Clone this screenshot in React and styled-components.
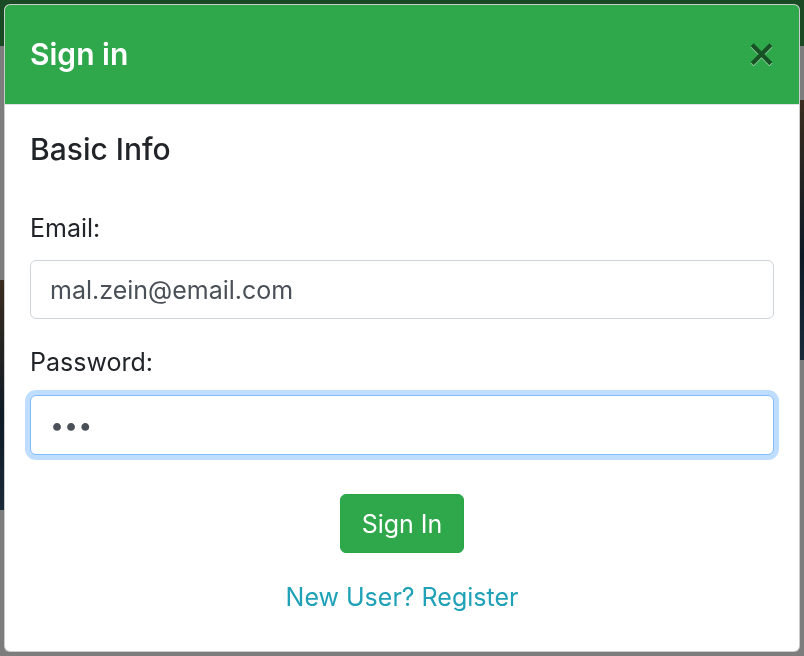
import React from 'react'
import styled, { createGlobalStyle } from 'styled-components'

const GlobalStyle = createGlobalStyle`
  html, body {
    margin: 0;
    padding: 0;
    width: 804px;
    height: 656px;
    overflow: hidden;
    font-family: Inter, "Liberation Sans", sans-serif;
  }
  * { box-sizing: border-box; }
`

// the dimmed page behind the dialog
const Page = styled.div`
  width: 804px;
  height: 656px;
  background: #7d7d7d;
  display: flex;
  flex-direction: column;
`

const Navbar = styled.div`
  height: 46px;
  background: #1a4a23;
`

const PageBody = styled.div`
  flex: 1;
  display: flex;
  justify-content: space-between;
  padding-top: 54px;
`

const Photo = styled.div`
  width: 12px;
  height: ${p => p.h}px;
  margin-top: ${p => p.top}px;
  background: linear-gradient(180deg, #3a2c1e, #0d1a26 60%, #1a2a3a);
`

const Overlay = styled.div`
  position: fixed;
  inset: 0;
  padding: 4px;
  display: flex;
`

const Modal = styled.div`
  width: 796px;
  height: 648px;
  background: #fff;
  border: 1px solid rgba(0, 0, 0, 0.2);
  border-radius: 6px;
  overflow: hidden;
  display: flex;
  flex-direction: column;
`

const Header = styled.div`
  background: #2fa74b;
  border-bottom: 1px solid #dee2e6;
  padding: 27px 22px 27px 25px;
  display: flex;
  align-items: center;
  justify-content: space-between;
`

const Title = styled.h5`
  margin: 0;
  color: #fff;
  font-size: 30px;
  font-weight: 600;
  line-height: 45px;
`

const Close = styled.button`
  border: 0;
  background: transparent;
  padding: 0;
  margin-top: -3px;
  font-family: "DejaVu Sans", sans-serif;
  font-size: 37px;
  font-weight: 700;
  line-height: 1;
  color: #000;
  opacity: 0.5;
  text-shadow: 0 1px 0 #fff;
  cursor: pointer;
`

const Body = styled.div`
  padding: 26px 25px 0 25px;
  display: flex;
  flex-direction: column;
  color: #212529;
`

const Heading = styled.h4`
  margin: 0 0 43px;
  font-size: 30px;
  font-weight: 500;
  line-height: 36px;
`

const Label = styled.label`
  display: block;
  font-size: 25px;
  line-height: 36px;
  margin-bottom: ${p => p.gap}px;
`

const Input = styled.input`
  display: block;
  width: 100%;
  height: ${p => p.h}px;
  padding: 0 19px;
  font-family: inherit;
  font-size: 25px;
  color: #495057;
  background: #fff;
  border: 1px solid ${p => (p.focused ? '#80bdff' : '#ced4da')};
  border-radius: 6px;
  outline: none;
  box-shadow: ${p => (p.focused ? '0 0 0 5px rgba(0, 123, 255, 0.25)' : 'none')};
  margin-bottom: ${p => p.gap}px;
`

const Actions = styled.div`
  display: flex;
  flex-direction: column;
  align-items: center;
  gap: 26px;
`

const Button = styled.button`
  height: 59px;
  padding: 0 21px;
  border: 1px solid #28a745;
  border-radius: 6px;
  background: #2fa74b;
  color: #fff;
  font-family: inherit;
  font-size: 25px;
  line-height: 36px;
  cursor: pointer;
`

const Link = styled.a`
  font-size: 25px;
  line-height: 36px;
  color: #1fa2b8;
  text-decoration: none;
  cursor: pointer;
`

export default function App() {
  return (
    <>
      <GlobalStyle />
      <Page>
        <Navbar />
        <PageBody>
          <Photo top={180} h={230} />
          <Photo top={0} h={260} />
        </PageBody>
      </Page>
      <Overlay>
        <Modal>
          <Header>
            <Title>Sign in</Title>
            <Close aria-label="Close">×</Close>
          </Header>
          <Body>
            <Heading>Basic Info</Heading>
            <Label gap={14}>Email:</Label>
            <Input h={59} gap={25} defaultValue="mal.zein@email.com" />
            <Label gap={15}>Password:</Label>
            <Input h={60} gap={39} focused type="password" defaultValue="abc" />
            <Actions>
              <Button>Sign In</Button>
              <Link>New User? Register</Link>
            </Actions>
          </Body>
        </Modal>
      </Overlay>
    </>
  )
}
